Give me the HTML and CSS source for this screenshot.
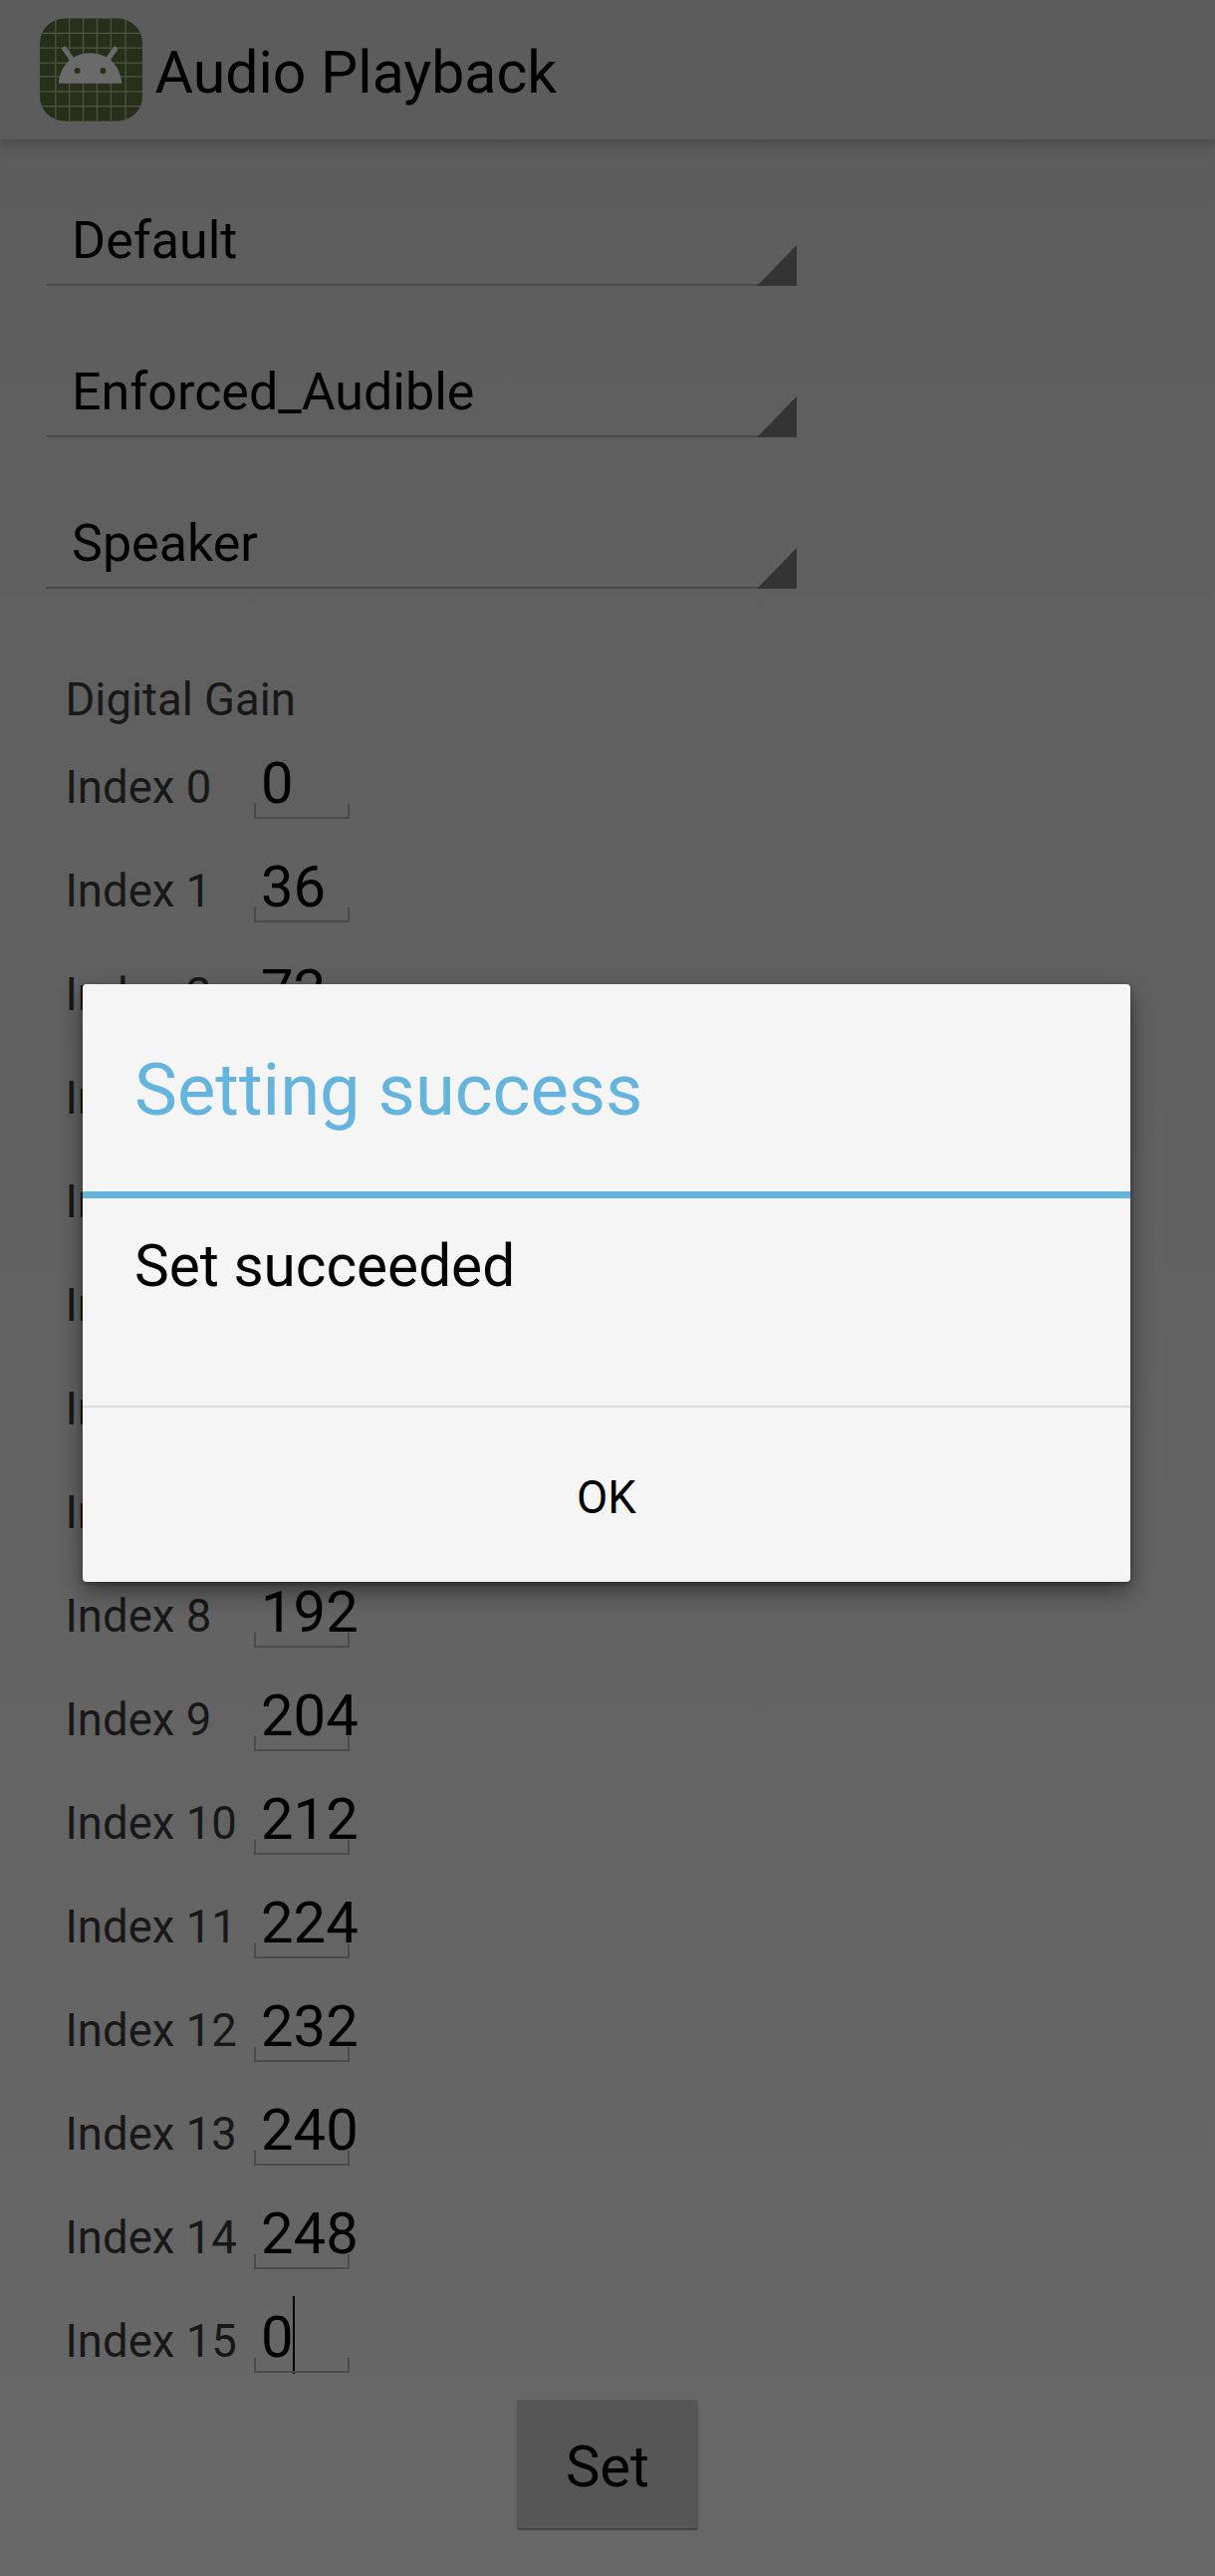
FILE: index.html
```html
<!DOCTYPE html>
<html lang="en">
<head>
<meta charset="utf-8">
<title>Audio Playback</title>
<link rel="stylesheet" href="styles.css">
</head>
<body>
<header class="appbar">
  <svg class="appicon" viewBox="0 0 104 104" aria-hidden="true">
    <rect width="104" height="104" rx="25" fill="#272f1b"/>
    <g class="grid">
      <path d="M16 0V104M30 0V104M44 0V104M58 0V104M72 0V104M87 0V104"/>
      <path d="M0 15H104M0 30H104M0 45H104M0 59H104M0 74H104M0 89H104"/>
    </g>
    <path class="antenna" d="M25 31L33 42M76.500 31L68.500 42"/>
    <path class="head" d="M19 66C20 47 34 35 51 35S82 47 83 66Z"/>
    <circle class="eye" cx="38" cy="53" r="3"/>
    <circle class="eye" cx="64" cy="53" r="3"/>
  </svg>
  <h1 class="apptitle">Audio Playback</h1>
</header>
<main class="content">
  <div class="spinner">Default<span class="caret"></span></div>
  <div class="spinner">Enforced_Audible<span class="caret"></span></div>
  <div class="spinner">Speaker<span class="caret"></span></div>
  <h2 class="section">Digital Gain</h2>
  <div class="rows">
    <div class="row"><span class="label">Index 0</span><span class="field">0</span></div>
    <div class="row"><span class="label">Index 1</span><span class="field">36</span></div>
    <div class="row"><span class="label">Index 2</span><span class="field">72</span></div>
    <div class="row"><span class="label">Index 3</span><span class="field">108</span></div>
    <div class="row"><span class="label">Index 4</span><span class="field">132</span></div>
    <div class="row"><span class="label">Index 5</span><span class="field">152</span></div>
    <div class="row"><span class="label">Index 6</span><span class="field">168</span></div>
    <div class="row"><span class="label">Index 7</span><span class="field">180</span></div>
    <div class="row"><span class="label">Index 8</span><span class="field">192</span></div>
    <div class="row"><span class="label">Index 9</span><span class="field">204</span></div>
    <div class="row"><span class="label">Index 10</span><span class="field">212</span></div>
    <div class="row"><span class="label">Index 11</span><span class="field">224</span></div>
    <div class="row"><span class="label">Index 12</span><span class="field">232</span></div>
    <div class="row"><span class="label">Index 13</span><span class="field">240</span></div>
    <div class="row"><span class="label">Index 14</span><span class="field">248</span></div>
    <div class="row"><span class="label">Index 15</span><span class="field">0<i class="cursor"></i></span></div>
  </div>
  <div class="actions"><button class="setbtn" type="button">Set</button></div>
</main>
<section class="dialog" role="alertdialog">
  <div class="dialog-title">Setting success</div>
  <div class="dialog-rule"></div>
  <div class="dialog-msg">Set succeeded</div>
  <div class="dialog-ok">OK</div>
</section>
</body>
</html>
```
FILE: styles.css
```css
* { box-sizing: border-box; }
html, body { margin: 0; height: 2586px; overflow: hidden; }
body {
  position: relative;
  font-family: Roboto, "Noto Sans", sans-serif;
  color: #000;
  background: linear-gradient(#5c5c5c 0, #5e5e5e 300px, #676767 2586px);
}
.appbar {
  height: 140px;
  display: flex;
  align-items: center;
  padding-left: 40px;
  background: #5c5c5c;
  box-shadow: 0 5px 6px rgba(0,0,0,.12), 0 12px 14px rgba(0,0,0,.06);
}
.appicon { width: 103px; height: 104px; flex: none; }
.grid path { stroke: #4f5645; stroke-width: 1.200; fill: none; }
.antenna { stroke: #6a6a6a; stroke-width: 5; stroke-linecap: round; fill: none; }
.head { fill: #6a6a6a; }
.eye { fill: #272f1b; }
.apptitle {
  margin: 6px 0 0 12.500px;
  font-size: 59px;
  font-weight: 400;
  line-height: 68px;
}
.content { padding-top: 72px; }
.spinner {
  position: relative;
  width: 754px;
  margin: 0 0 77px 46px;
  padding: 0 0 13px 26px;
  border-bottom: 2px solid #4b4b4b;
  font-size: 52px;
  line-height: 60px;
}
.spinner:nth-of-type(3) { margin-bottom: 0; }
.caret {
  position: absolute;
  right: 0;
  bottom: -2px;
  width: 40px;
  height: 41px;
  background: #343434;
  clip-path: polygon(100% 0, 100% 100%, 0 100%);
}
.section {
  margin: 86px 0 22px 65.500px;
  font-size: 45.500px;
  font-weight: 400;
  line-height: 52px;
  color: #181818;
}
.row {
  display: flex;
  align-items: baseline;
  height: 104px;
  padding-left: 65.500px;
}
.label {
  width: 189.500px;
  flex: none;
  font-size: 45.500px;
  line-height: 71px;
  color: #181818;
}
.field {
  position: relative;
  display: block;
  width: 96px;
  height: 71px;
  padding-left: 7px;
  font-size: 58px;
  line-height: 71px;
  white-space: nowrap;
}
.field::after {
  content: "";
  position: absolute;
  left: 0;
  right: 0;
  bottom: 0;
  height: 13px;
  border: 2px solid #4b4b4b;
  border-top: 0;
}
.cursor {
  position: absolute;
  left: 39px;
  top: -6px;
  width: 1.500px;
  height: 78px;
  background: #000;
}
.actions { display: flex; justify-content: center; margin-top: -6px; }
.setbtn {
  width: 182px;
  height: 129px;
  padding: 5px 0 0;
  border: 0;
  border-radius: 3px;
  background: #565656;
  box-shadow: 0 2px 1px #424242;
  font: 400 58px Roboto, "Noto Sans", sans-serif;
  color: #000;
}
.dialog {
  position: absolute;
  left: 83px;
  top: 988px;
  width: 1052px;
  height: 600px;
  background: #f5f5f5;
  border-radius: 4px;
  box-shadow: 0 10px 24px rgba(0,0,0,.45), 0 2px 4px rgba(0,0,0,.3);
}
.dialog-title {
  height: 208px;
  padding: 64.500px 0 0 52px;
  font-size: 72.300px;
  line-height: 84px;
  color: #64b4dd;
}
.dialog-rule { height: 7px; background: #64b4dd; }
.dialog-msg {
  height: 210px;
  padding: 34px 0 0 52px;
  border-bottom: 2px solid #dcdcdc;
  font-size: 58.500px;
  line-height: 69px;
}
.dialog-ok {
  padding-top: 65px;
  text-align: center;
  font-size: 45.500px;
  line-height: 52px;
}
```
